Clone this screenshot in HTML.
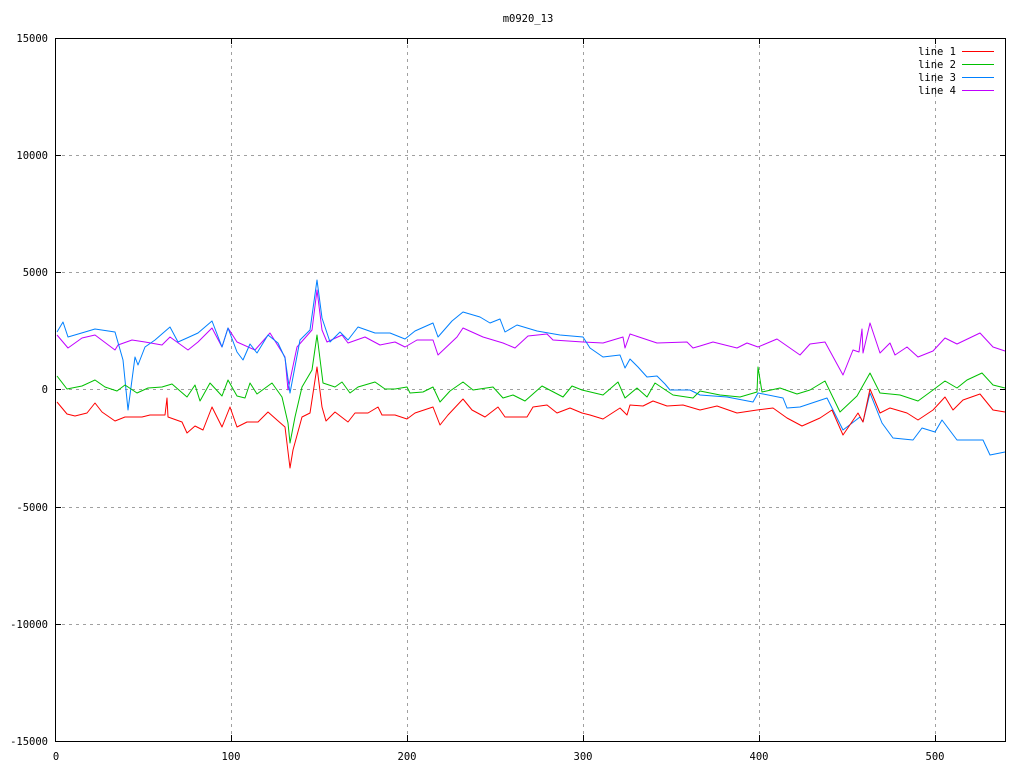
<!DOCTYPE html>
<html><head><meta charset="utf-8"><style>html,body{margin:0;padding:0;background:#fff}svg{display:block}text{font-family:"DejaVu Sans Mono","Liberation Mono",monospace;font-size:10.5px;fill:#000}</style></head><body>
<svg width="1024" height="768" viewBox="0 0 1024 768" xmlns="http://www.w3.org/2000/svg">
<rect width="1024" height="768" fill="#fff"/>
<g stroke="#a0a0a0" stroke-width="1" stroke-dasharray="3,4" fill="none">
<path d="M55 155.5H1006M55 272.5H1006M55 389.5H1006M55 507.5H1006M55 624.5H1006"/>
<path d="M231.5 38V741M407.5 38V741M583.5 38V741M759.5 38V741M935.5 38V741"/>
</g>
<g stroke="#000" stroke-width="1" fill="none">
<rect x="55.5" y="38.5" width="950" height="703"/>
<path d="M55 155.5h6M55 272.5h6M55 389.5h6M55 507.5h6M55 624.5h6M1006 155.5h-6M1006 272.5h-6M1006 389.5h-6M1006 507.5h-6M1006 624.5h-6"/>
<path d="M231.5 38v6M407.5 38v6M583.5 38v6M759.5 38v6M935.5 38v6M231.5 741v-6M407.5 741v-6M583.5 741v-6M759.5 741v-6M935.5 741v-6"/>
</g>
<g text-anchor="end">
<text x="48" y="42">15000</text><text x="48" y="159">10000</text><text x="48" y="276">5000</text><text x="48" y="393">0</text><text x="48" y="511">-5000</text><text x="48" y="628">-10000</text><text x="48" y="745">-15000</text>
</g>
<g text-anchor="middle">
<text x="56" y="760">0</text><text x="231" y="760">100</text><text x="407" y="760">200</text><text x="583" y="760">300</text><text x="759" y="760">400</text><text x="935" y="760">500</text>
<text x="528" y="22">m0920_13</text>
</g>
<g text-anchor="end">
<text x="956" y="55">line 1</text><text x="956" y="68">line 2</text><text x="956" y="81">line 3</text><text x="956" y="94">line 4</text>
</g>
<g fill="none" stroke-width="1" stroke-linejoin="round">
<path stroke="#ff0000" d="M962 51.5h32"/><path stroke="#00c000" d="M962 64.5h32"/><path stroke="#0080ff" d="M962 77.5h32"/><path stroke="#c000ff" d="M962 90.5h32"/>
<polyline stroke="#c000ff" points="57,335 68,348 82,338 95,335 115,350 118,345 132,340 145,342 162,345 170,337 188,350 198,342 212,328 222,347 228,328 237,342 255,350 270,333 285,357 288,390 297,347 312,330 317,290 322,330 327,342 342,335 348,343 365,337 380,345 395,342 405,347 417,340 433,340 438,355 457,337 463,328 483,337 503,343 515,348 528,336 547,334 553,340 583,342 603,343 623,337 625,348 630,334 657,343 687,342 693,348 700,346 713,342 737,348 747,343 758,347 777,339 800,355 810,344 825,342 843,375 853,350 859,352 862,329 863,353 870,323 880,353 890,343 895,355 907,347 918,357 933,351 945,338 957,344 980,333 993,347 1005,351"/>
<polyline stroke="#0080ff" points="57,332 63,322 68,337 85,332 95,329 115,332 123,360 128,410 135,357 138,365 145,347 155,340 170,327 178,342 187,338 198,333 212,321 222,347 228,328 237,352 243,360 250,344 257,353 268,335 278,343 285,358 290,393 300,340 310,330 317,280 322,318 330,342 340,332 348,340 358,327 375,333 390,333 405,339 415,331 433,323 438,337 452,321 463,312 480,317 490,323 500,319 505,332 517,325 537,331 560,335 583,337 590,348 603,357 620,355 625,368 630,359 638,367 647,377 657,376 665,384 670,390 690,390 700,395 727,397 753,402 758,393 783,398 787,408 800,407 827,398 843,430 860,417 863,422 870,393 882,423 893,438 913,440 922,428 935,432 942,420 957,440 983,440 990,455 1005,452"/>
<polyline stroke="#00c000" points="57,376 67,389 82,386 95,380 105,387 117,391 125,385 137,393 148,388 162,387 172,384 187,397 195,385 200,401 210,383 222,396 228,380 237,396 245,398 250,383 257,394 272,383 282,397 288,423 290,443 295,417 302,387 312,370 317,335 323,383 335,387 342,382 350,393 358,387 375,382 385,389 395,389 407,387 410,393 423,392 433,387 440,402 450,391 463,382 473,390 493,387 503,398 513,395 525,401 542,386 563,397 572,386 582,390 603,395 618,382 625,398 637,388 647,397 655,383 673,395 693,398 700,391 720,395 740,397 757,392 758,367 762,392 780,388 797,394 810,390 825,381 840,412 857,396 870,373 880,393 900,395 918,401 933,390 945,381 957,388 967,380 982,373 993,385 1005,388"/>
<polyline stroke="#ff0000" points="57,402 67,414 75,416 87,413 95,403 102,412 115,421 125,417 142,417 150,415 165,415 167,398 168,417 182,422 187,433 195,426 203,430 212,407 222,427 230,407 237,427 247,422 258,422 268,412 277,420 285,427 290,468 293,450 302,417 310,413 317,367 322,407 326,421 335,412 348,422 355,413 368,413 378,407 382,415 395,415 407,419 415,413 433,407 440,425 448,415 463,399 472,410 485,417 498,407 505,417 517,417 527,417 533,407 547,405 557,413 570,408 582,413 590,415 603,419 620,408 627,415 630,405 643,406 653,401 667,406 683,405 700,410 717,406 737,413 757,410 773,408 787,418 802,426 820,418 832,410 843,435 858,413 863,422 870,389 880,413 890,408 907,413 918,420 933,410 945,397 953,410 963,400 980,394 993,410 1005,412"/>
</g>
</svg>
</body></html>
